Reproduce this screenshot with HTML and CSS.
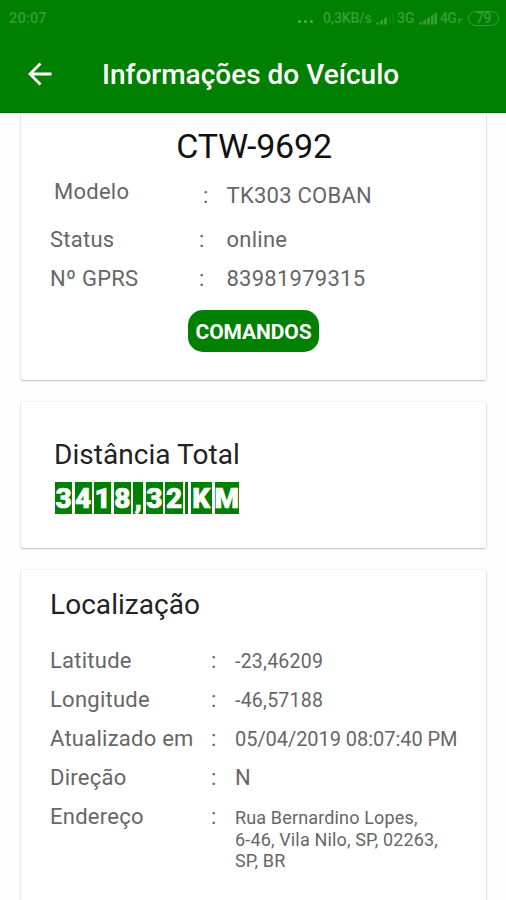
FILE: index.html
```html
<!DOCTYPE html>
<html lang="pt-BR">
<head>
<meta charset="utf-8">
<title>Informações do Veículo</title>
<link rel="stylesheet" href="styles.css">
</head>
<body>
<header class="top">
  <div class="statusbar">
    <span class="clock">20:07</span>
    <span class="dots"><i></i><i></i><i></i></span>
    <span class="speed">0,3KB/s</span>
    <svg class="signal" width="19" height="13" viewBox="0 0 19 13"><path d="M0 12.500V11L3 9.800v2.700zM4 12.500V9l3-1.500v5zM8 12.500V6.500L11 4.500v8z" fill="currentColor"/><path d="M13 3h1.500v9.500H13zM16.500 1H18v11.500h-1.500z" fill="currentColor" opacity=".3"/></svg>
    <span class="net3">3G</span>
    <svg class="signal" width="19" height="13" viewBox="0 0 19 13"><path d="M0 12.500V11L3 9.800v2.700zM4 12.500V9l3-1.500v5zM8 12.500V6.500L11 5v7.500zM12 12.500V4l2.500-1.500v10zM15.500 12.500V1.500L18 .5v12z" fill="currentColor"/></svg>
    <span class="net4">4G</span>
    <svg class="tick" width="5" height="6" viewBox="0 0 5 6"><path d="M1 5.500V1.500h3.500" fill="none" stroke="currentColor" stroke-width="1.500"/></svg>
    <span class="battery">79</span>
  </div>
  <div class="appbar">
    <svg class="back" width="24" height="24" viewBox="0 0 24 24"><path d="M23.500 12H2M12.500 1.500L2 12l10.500 10.500" fill="none" stroke="#fff" stroke-width="2.800"/></svg>
    <h1>Informações do Veículo</h1>
  </div>
</header>
<main>
  <section class="card vehicle">
    <h2 class="plate">CTW-9692</h2>
    <div class="row model"><span class="label">Modelo</span><span class="colon">:</span><span class="value">TK303 COBAN</span></div>
    <div class="row"><span class="label">Status</span><span class="colon">:</span><span class="value">online</span></div>
    <div class="row"><span class="label">Nº GPRS</span><span class="colon">:</span><span class="value">83981979315</span></div>
    <button class="commands">COMANDOS</button>
  </section>
  <section class="card distance">
    <h2 class="heading">Distância Total</h2>
    <div class="odometer"><b>3</b><b>4</b><b>1</b><b>8</b><b class="comma">,</b><b>3</b><b>2</b><b class="space"></b><b class="k">K</b><b class="m">M</b></div>
  </section>
  <section class="card location">
    <h2 class="heading">Localização</h2>
    <div class="row"><span class="label">Latitude</span><span class="colon">:</span><span class="value small">-23,46209</span></div>
    <div class="row"><span class="label">Longitude</span><span class="colon">:</span><span class="value small">-46,57188</span></div>
    <div class="row"><span class="label">Atualizado em</span><span class="colon">:</span><span class="value date">05/04/2019 08:07:40 PM</span></div>
    <div class="row"><span class="label">Direção</span><span class="colon">:</span><span class="value">N</span></div>
    <div class="row address"><span class="label">Endereço</span><span class="colon">:</span><span class="value">Rua Bernardino Lopes,<br>6-46, Vila Nilo, SP, 02263,<br>SP, BR</span></div>
  </section>
</main>
</body>
</html>
```
FILE: styles.css
```css
* { box-sizing: border-box; }
body {
  margin: 0;
  height: 900px;
  overflow: hidden;
  background: #fefefe;
  font-family: Roboto, sans-serif;
  color: #666;
}
h1, h2 { margin: 0; font-weight: 400; white-space: nowrap; }
.top { height: 113px; background: #008000; border-bottom: 1px solid #006c00; }
.statusbar {
  height: 37px;
  padding: 0 7px 0 9px;
  display: flex;
  align-items: center;
  font-size: 14px;
  font-weight: 500;
  color: #3a9d3a;
  line-height: 37px;
}
.clock { flex: none; width: 289px; font-size: 14.500px; letter-spacing: .2px; }
.dots { flex: none; display: flex; gap: 3px; width: 25px; padding-top: 6px; }
.dots i { width: 3px; height: 3px; border-radius: 50%; background: #58af58; }
.speed { flex: none; width: 53px; letter-spacing: -.1px; }
.signal { flex: none; margin-top: -1px; }
.net3 { flex: none; width: 24px; padding-left: 2px; }
.net4 { flex: none; width: 20px; padding-left: 2px; letter-spacing: -.6px; }
.tick { margin: 5px 0 0; flex: none; }
.battery {
  flex: none;
  width: 31px;
  height: 15px;
  margin-left: auto;
  border: 1.500px solid #3a9d3a;
  border-radius: 8px;
  font-size: 14px;
  line-height: 13px;
  letter-spacing: -.5px;
  text-align: center;
}
.appbar { height: 75px; display: flex; align-items: center; padding-left: 28px; }
.back { flex: none; margin-top: -1px; }
h1 { margin-left: 50px; font-size: 28px; font-weight: 500; color: #fff; line-height: 32px; }
main { display: flex; flex-direction: column; gap: 22px; padding: 0 20px 0 21px; }
.card {
  background: #fff;
  border-radius: 2px;
  box-shadow: 0 1px 2px rgba(0,0,0,.24), 0 0 2px rgba(0,0,0,.12);
}
.vehicle { height: 267px; clip-path: inset(0 -5px -5px -5px); padding: 11px 0 0 29px; }
.plate {
  height: 44px;
  margin-left: -28px;
  text-align: center;
  font-size: 34px;
  letter-spacing: -.2px;
  line-height: 44px;
  color: #111;
}
.row {
  display: grid;
  grid-template-columns: 149px 27.500px 1fr;
  height: 39px;
  line-height: 39px;
  font-size: 22px;
  letter-spacing: .25px;
  white-space: nowrap;
}
.model { height: 52px; line-height: 55px; grid-template-columns: 153px 23.500px 1fr; }
.model .label { padding-left: 4px; line-height: 48px; }
.commands {
  display: block;
  width: 131px;
  height: 42px;
  margin: 12px 0 0 138px;
  padding: 0;
  border: 0;
  border-radius: 15px;
  background: #008000;
  color: #fff;
  font: 700 21px/45px Roboto, sans-serif;
  letter-spacing: -.1px;
}
.distance { height: 146px; padding: 35px 0 0 33px; }
.heading { height: 36px; font-size: 28px; letter-spacing: .05px; line-height: 36px; color: #222; }
.odometer {
  display: flex;
  gap: 2.500px;
  width: 185px;
  height: 32px;
  margin: 9px 0 0 1px;
}
.odometer b {
  flex: 0 0 17.100px;
  height: 32px;
  background: #008000;
  color: #fff;
  font-size: 28px;
  font-weight: 900;
  line-height: 33px;
  text-align: center;
  -webkit-text-stroke: .6px #fff;
}
.odometer .comma { flex-basis: 10px; }
.odometer .space { flex-basis: 3px; }
.odometer .k { flex-basis: 21.500px; }
.odometer .m { flex-basis: 24.500px; }
.location { height: 345px; padding: 17px 0 0 29px; }
.location .heading { margin-bottom: 18px; }
.location .row { grid-template-columns: 161px 24px 1fr; }
.location .small { font-size: 19.500px; line-height: 41px; }
.location .date { font-size: 20px; line-height: 40px; letter-spacing: -.05px; }
.address .value { padding-top: 10px; font-size: 18px; line-height: 21.500px; letter-spacing: .15px; }
```
